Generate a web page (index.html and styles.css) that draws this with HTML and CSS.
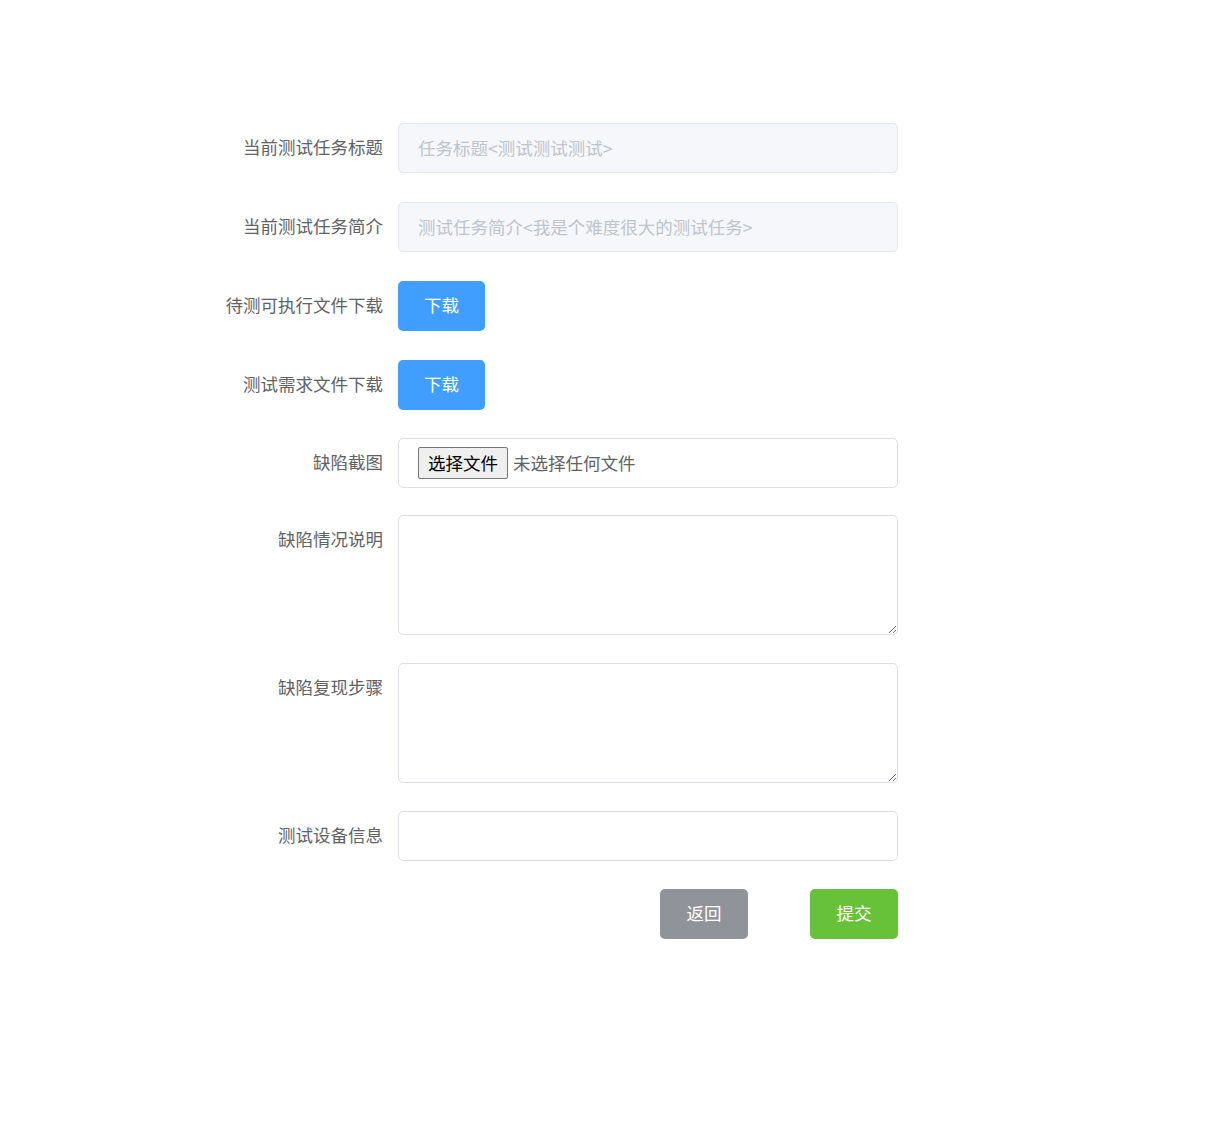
FILE: index.html
```html
<!DOCTYPE html>
<html lang="zh-CN">
<head>
<meta charset="utf-8">
<title>提交缺陷</title>
<link rel="stylesheet" href="styles.css">
</head>
<body>
<form class="form">
  <div class="row gap-lg">
    <label class="label">当前测试任务标题</label>
    <div class="field"><input class="input disabled" disabled placeholder="任务标题<测试测试测试>"></div>
  </div>
  <div class="row gap-lg">
    <label class="label">当前测试任务简介</label>
    <div class="field"><input class="input disabled" disabled placeholder="测试任务简介<我是个难度很大的测试任务>"></div>
  </div>
  <div class="row gap-lg">
    <label class="label">待测可执行文件下载</label>
    <div class="field"><button type="button" class="btn btn-primary">下载</button></div>
  </div>
  <div class="row">
    <label class="label">测试需求文件下载</label>
    <div class="field"><button type="button" class="btn btn-primary">下载</button></div>
  </div>
  <div class="row gap-sm">
    <label class="label">缺陷截图</label>
    <div class="field">
      <div class="filebox">
        <span class="file-btn">选择文件</span>
        <span class="file-text">未选择任何文件</span>
      </div>
    </div>
  </div>
  <div class="row row-top">
    <label class="label">缺陷情况说明</label>
    <div class="field"><textarea class="textarea"></textarea></div>
  </div>
  <div class="row row-top">
    <label class="label">缺陷复现步骤</label>
    <div class="field"><textarea class="textarea"></textarea></div>
  </div>
  <div class="row">
    <label class="label">测试设备信息</label>
    <div class="field"><input class="input"></div>
  </div>
  <div class="row">
    <div class="label"></div>
    <div class="field actions">
      <button type="button" class="btn btn-info">返回</button>
      <button type="button" class="btn btn-success">提交</button>
    </div>
  </div>
</form>
</body>
</html>
```

FILE: styles.css
```css
html, body {
  margin: 0;
  padding: 0;
  background: #fff;
}
body {
  font-family: "Microsoft YaHei", "Noto Sans CJK SC", "Noto Sans", sans-serif;
  color: #606266;
}
.form {
  padding-top: 123px;
  padding-left: 223px;
  width: 675px;
}
.row {
  display: flex;
  align-items: center;
  margin-bottom: 28px;
}
.row.gap-lg {
  margin-bottom: 29px;
}
.row.gap-sm {
  margin-bottom: 27px;
}
.row-top {
  align-items: flex-start;
}
.label {
  width: 175px;
  flex: none;
  padding-right: 15px;
  padding-bottom: 2px;
  box-sizing: border-box;
  text-align: right;
  font-size: 17.5px;
  line-height: 48px;
  color: #606266;
  white-space: nowrap;
}
.field {
  width: 500px;
  flex: none;
}
.input {
  display: block;
  width: 100%;
  height: 50px;
  box-sizing: border-box;
  border: 1px solid #dcdfe6;
  border-radius: 5px;
  padding: 0 19px 2px;
  font-family: inherit;
  font-size: 17.5px;
  color: #606266;
  background: #fff;
  outline: none;
}
.input.disabled {
  background: #f5f7fa;
  border-color: #e4e7ed;
}
.input::placeholder {
  color: #c0c4cc;
}
.btn {
  height: 50px;
  width: 87px;
  border: none;
  border-radius: 5px;
  color: #fff;
  font-family: inherit;
  font-size: 17.5px;
  cursor: pointer;
  padding: 0 0 3px;
}
.btn-primary { background: #409eff; }
.btn-info { background: #909399; width: 88px; }
.btn-success { background: #67c23a; width: 88px; }
.actions {
  display: flex;
  justify-content: flex-end;
  gap: 62px;
}
.filebox {
  height: 50px;
  box-sizing: border-box;
  border: 1px solid #dcdfe6;
  border-radius: 5px;
  padding-left: 19px;
  display: flex;
  align-items: center;
}
.file-btn {
  display: inline-flex;
  align-items: center;
  justify-content: center;
  height: 32px;
  width: 90px;
  box-sizing: border-box;
  border: 1px solid #767676;
  border-radius: 2px;
  background: #efefef;
  color: #000;
  font-size: 17.5px;
  padding-bottom: 2px;
}
.file-text {
  margin-left: 5px;
  font-size: 17.5px;
  color: #606266;
  padding-bottom: 2px;
}
.textarea {
  display: block;
  width: 100%;
  height: 120px;
  box-sizing: border-box;
  border: 1px solid #dcdfe6;
  border-radius: 5px;
  padding: 5px 15px;
  font-family: inherit;
  font-size: 17.5px;
  color: #606266;
  resize: vertical;
  outline: none;
}
```
